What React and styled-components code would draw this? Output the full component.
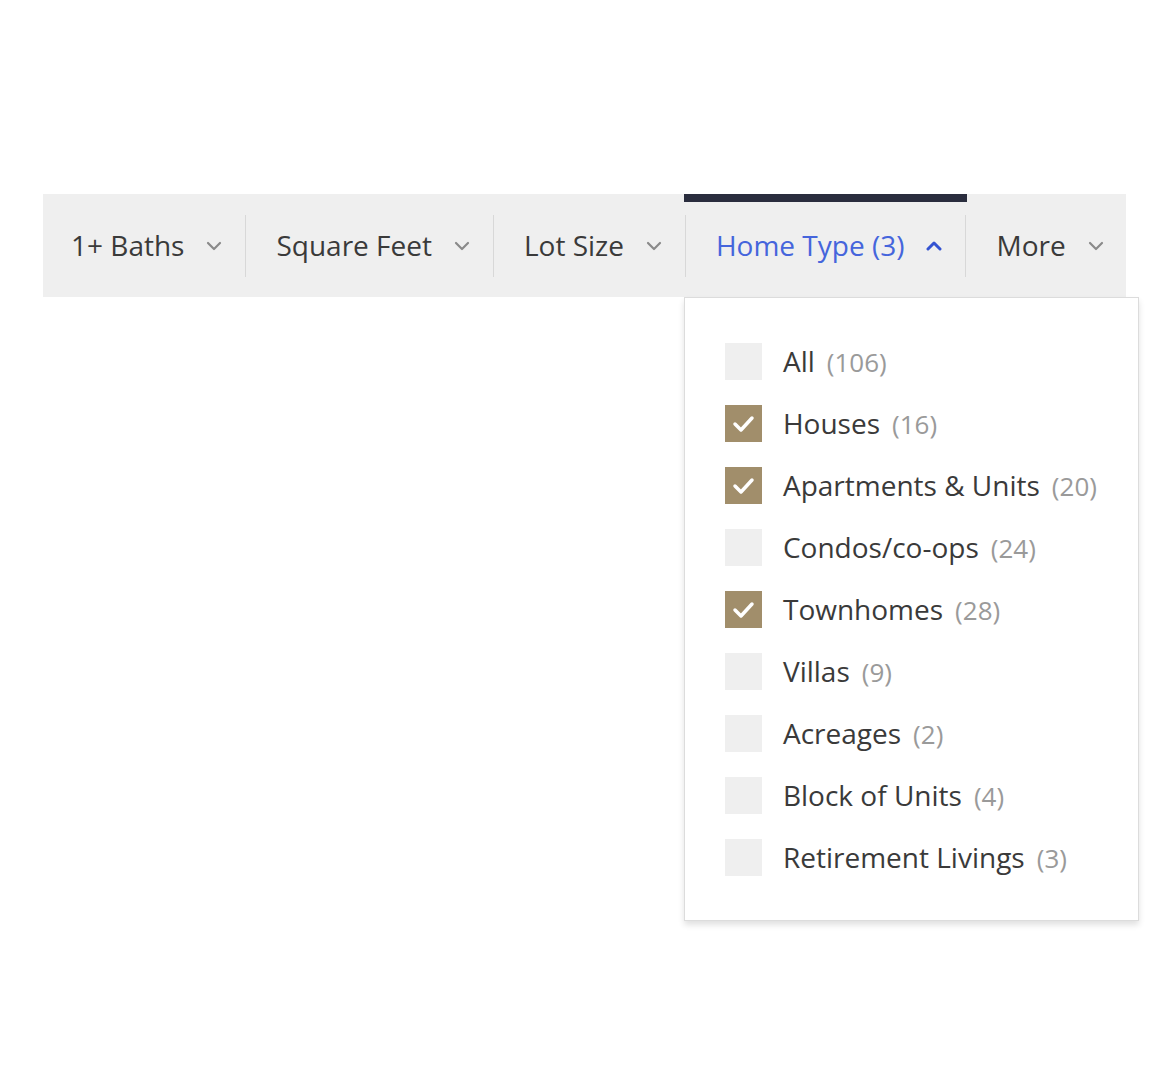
import styled, { createGlobalStyle } from "styled-components"

const GlobalStyle = createGlobalStyle`
  body {
    margin: 0;
    background: #ffffff;
    font-family: "Open Sans", "Noto Sans", sans-serif;
  }
`

const tabs = [
  { label: "1+ Baths", first: true },
  { label: "Square Feet" },
  { label: "Lot Size" },
  { label: "Home Type (3)", active: true },
  { label: "More" },
]

const homeTypes = [
  { name: "All", count: 106, checked: false },
  { name: "Houses", count: 16, checked: true },
  { name: "Apartments & Units", count: 20, checked: true },
  { name: "Condos/co-ops", count: 24, checked: false },
  { name: "Townhomes", count: 28, checked: true },
  { name: "Villas", count: 9, checked: false },
  { name: "Acreages", count: 2, checked: false },
  { name: "Block of Units", count: 4, checked: false },
  { name: "Retirement Livings", count: 3, checked: false },
]

const Chevron = ({ up }) => (
  <ChevronSvg viewBox="0 0 16 10" $up={up}>
    <polyline
      points={up ? "2,8 8,2 14,8" : "2,2 8,8 14,2"}
      fill="none"
      stroke="currentColor"
      strokeWidth={up ? 3 : 2.2}
      strokeLinecap="round"
      strokeLinejoin="round"
    />
  </ChevronSvg>
)

const Check = () => (
  <svg width="37" height="37" viewBox="0 0 37 37">
    <polyline
      points="10,19 16,25 27,13"
      fill="none"
      stroke="#ffffff"
      strokeWidth="3.5"
      strokeLinecap="round"
      strokeLinejoin="round"
    />
  </svg>
)

const App = () => {
  return (
    <Page>
      <GlobalStyle />
      <Bar>
        {tabs.map((tab, i) => (
          <Segment key={tab.label}>
            {i > 0 && <Divider />}
            <Tab $active={tab.active} $first={tab.first}>
              <TabLabel $active={tab.active}>{tab.label}</TabLabel>
              <Chevron up={tab.active} />
              {tab.active && (
                <Menu>
                  {homeTypes.map((type) => (
                    <Option key={type.name}>
                      <Box $checked={type.checked}>
                        {type.checked && <Check />}
                      </Box>
                      <OptionName>{type.name}</OptionName>
                      <Count>({type.count})</Count>
                    </Option>
                  ))}
                </Menu>
              )}
            </Tab>
          </Segment>
        ))}
      </Bar>
    </Page>
  )
}
export default App

const Page = styled.div`
  padding: 194px 0 0 43px;
  min-height: 1078px;
  box-sizing: border-box;
`

const Bar = styled.div`
  width: 1083px;
  height: 103px;
  background-color: #efefef;
  display: flex;
  align-items: stretch;
`

const Segment = styled.div`
  display: flex;
  align-items: center;
`

const Divider = styled.div`
  width: 1px;
  height: 62px;
  background-color: #d8d8d8;
`

const Tab = styled.div`
  position: relative;
  height: 100%;
  box-sizing: border-box;
  display: flex;
  align-items: center;
  gap: 22px;
  padding: 0 23px 0 ${(p) => (p.$first ? "28px" : "30px")};
  cursor: pointer;

  ${(p) =>
    p.$active &&
    `
    &::before {
      content: "";
      position: absolute;
      top: 0;
      left: -2px;
      right: -2px;
      height: 8px;
      background-color: #2a2d3e;
    }
  `}
`

const TabLabel = styled.span`
  font-size: 28px;
  line-height: 1;
  white-space: nowrap;
  color: ${(p) => (p.$active ? "#4565dc" : "#3a3a3a")};
  margin-top: -2px;
`

const ChevronSvg = styled.svg`
  width: 16px;
  height: 10px;
  flex-shrink: 0;
  color: ${(p) => (p.$up ? "#3453d1" : "#8a8a8a")};
`

const Menu = styled.div`
  position: absolute;
  top: 100%;
  left: -2px;
  width: 455px;
  box-sizing: border-box;
  background: #ffffff;
  border: 1px solid #dcdcdc;
  box-shadow: 0 4px 6px rgba(0, 0, 0, 0.12);
  padding: 45px 0 44px 40px;
  display: flex;
  flex-direction: column;
  gap: 25px;
  cursor: default;
`

const Option = styled.label`
  display: flex;
  align-items: center;
  height: 37px;
  white-space: nowrap;
`

const Box = styled.span`
  width: 37px;
  height: 37px;
  flex-shrink: 0;
  margin-right: 21px;
  background-color: ${(p) => (p.$checked ? "#a18e6b" : "#efefef")};
  display: flex;
`

const OptionName = styled.span`
  font-size: 28px;
  color: #3a3a3a;
  margin-top: -2px;
`

const Count = styled.span`
  font-size: 26px;
  color: #9a9a9a;
  margin-left: 12px;
`
